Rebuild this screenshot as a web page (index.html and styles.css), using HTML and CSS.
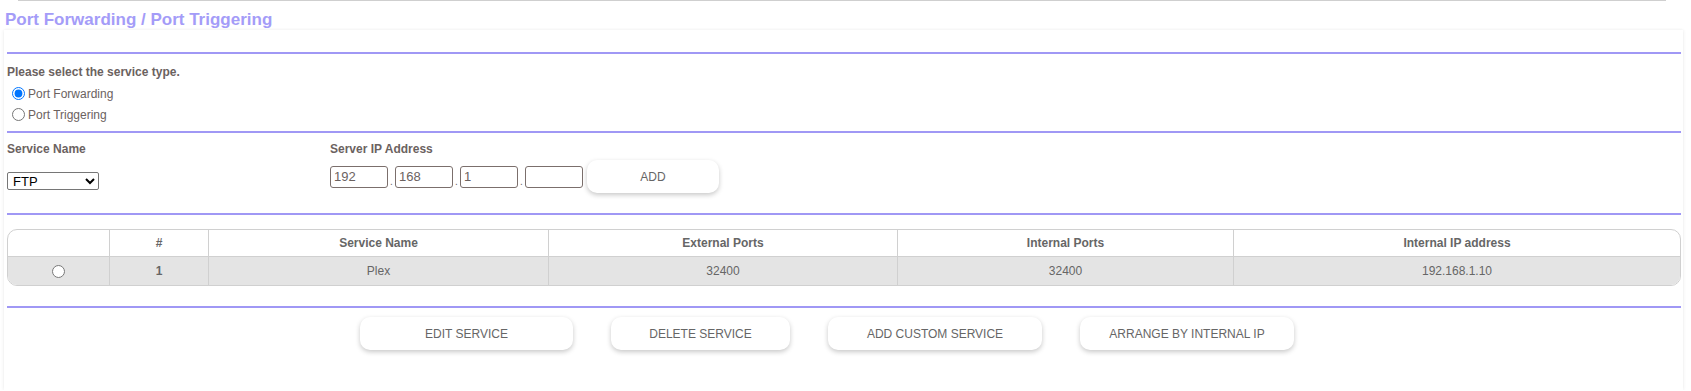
FILE: index.html
```html
<!DOCTYPE html>
<html lang="en">
<head>
    <meta charset="UTF-8">
    <meta name="viewport" content="width=device-width, initial-scale=1.0">
    <title>Port Forwarding / Port Triggering</title>
    <link rel="stylesheet" href="styles.css">
</head>
<body>
    <div class="topbar"></div>
    <h1 class="page-title">Port Forwarding / Port Triggering</h1>

    <div class="panel">
        <hr class="rule">

        <!-- service type -->
        <div class="service-type">
            <div class="label">Please select the service type.</div>
            <label class="radio-row">
                <input type="radio" name="svctype" value="forward" checked> Port Forwarding
            </label>
            <label class="radio-row">
                <input type="radio" name="svctype" value="trigger"> Port Triggering
            </label>
        </div>

        <hr class="rule">

        <div class="service-row">
            <div class="col-name">
                <div class="label">Service Name</div>
                <select class="service-select">
                    <option selected>FTP</option>
                    <option>HTTP</option>
                    <option>HTTPS</option>
                    <option>SSH</option>
                    <option>Telnet</option>
                </select>
            </div>
            <div class="col-ip">
                <div class="label">Server IP Address</div>
                <div class="ip-fields">
                    <input type="text" class="ip-box" value="192"><span class="dot">.</span>
                    <input type="text" class="ip-box" value="168"><span class="dot">.</span>
                    <input type="text" class="ip-box" value="1"><span class="dot">.</span>
                    <input type="text" class="ip-box" value="">
                    <button type="button" class="btn btn-add">ADD</button>
                </div>
            </div>
        </div>

        <hr class="rule">

        <table class="rules-table">
            <colgroup>
                <col style="width:101px">
                <col style="width:99px">
                <col style="width:340px">
                <col style="width:349px">
                <col style="width:336px">
                <col>
            </colgroup>
            <thead>
                <tr>
                    <th></th>
                    <th>#</th>
                    <th>Service Name</th>
                    <th>External Ports</th>
                    <th>Internal Ports</th>
                    <th>Internal IP address</th>
                </tr>
            </thead>
            <tbody>
                <tr>
                    <td><input type="radio" name="rule"></td>
                    <td class="num">1</td>
                    <td>Plex</td>
                    <td>32400</td>
                    <td>32400</td>
                    <td>192.168.1.10</td>
                </tr>
            </tbody>
        </table>

        <hr class="rule rule-bottom">

        <div class="actions">
            <button type="button" class="btn btn-edit">EDIT SERVICE</button>
            <button type="button" class="btn btn-delete">DELETE SERVICE</button>
            <button type="button" class="btn btn-wide">ADD CUSTOM SERVICE</button>
            <button type="button" class="btn btn-wide">ARRANGE BY INTERNAL IP</button>
        </div>
    </div>
</body>
</html>
```

FILE: styles.css
```css
body {
    margin: 0;
    font-family: "Liberation Sans", Arial, sans-serif;
    font-size: 12px;
    color: #6b625f;
    background-color: #fff;
}
.topbar {
    height: 1px;
    margin: 0 25px 0 18px;
    background-color: #cfcfcf;
}
.page-title {
    margin: 9px 0 0 5px;
    font-size: 17px;
    line-height: 20px;
    font-weight: bold;
    color: #a49cf8;
}
.panel {
    margin: 0 8px 0 4px;
    padding: 22px 2px 40px 3px;
    box-shadow: 1px 0 3px rgba(0, 0, 0, 0.05), -1px 0 3px rgba(0, 0, 0, 0.05);
}
.rule {
    height: 2px;
    margin: 0;
    border: none;
    background-color: #a098f5;
}
.label {
    font-weight: bold;
    line-height: 16px;
}

/* service type */
.service-type {
    padding: 10px 0 6px 0;
}
.service-type .label {
    margin-bottom: 3px;
}
.radio-row {
    display: flex;
    align-items: center;
    height: 21px;
}
.radio-row input {
    width: 13px;
    height: 13px;
    margin: 0 3px 0 5px;
}

/* service name + ip */
.service-row {
    display: flex;
    padding: 8px 0 20px 0;
}
.col-name {
    width: 323px;
}
.service-select {
    display: block;
    margin-top: 15px;
    width: 92px;
    height: 18px;
    padding: 0 0 0 1px;
    border: 1px solid #767676;
    border-radius: 2px;
    font-family: "Liberation Sans", Arial, sans-serif;
    font-size: 13px;
    color: #000;
    background-color: #fff;
}
.ip-fields {
    display: flex;
    align-items: center;
    margin-top: 3px;
}
.ip-box {
    box-sizing: border-box;
    width: 58px;
    height: 22px;
    padding: 0 3px;
    border: 1px solid #7b6f6c;
    border-radius: 3px;
    font-family: "Liberation Sans", Arial, sans-serif;
    font-size: 13px;
    color: #6b625f;
}
.dot {
    width: 7px;
    align-self: flex-end;
    margin-bottom: 6px;
    font-size: 10px;
    line-height: 10px;
    text-align: center;
}
.btn {
    height: 33px;
    border: none;
    border-radius: 10px;
    background-color: #fff;
    box-shadow: 0 2px 5px rgba(0, 0, 0, 0.22);
    font-family: "Liberation Sans", Arial, sans-serif;
    font-size: 12px;
    color: #666;
    cursor: pointer;
}
.btn-add {
    width: 132px;
    margin-left: 4px;
}

/* table */
.rules-table {
    width: 100%;
    margin-top: 14px;
    table-layout: fixed;
    border-collapse: separate;
    border-spacing: 0;
    border: 1px solid #d0d0d0;
    border-radius: 10px;
    overflow: hidden;
    color: #666;
}
.rules-table th,
.rules-table td {
    padding: 0;
    text-align: center;
    border-left: 1px solid #d0d0d0;
}
.rules-table th:first-child,
.rules-table td:first-child {
    border-left: none;
}
.rules-table th {
    height: 26px;
    font-weight: bold;
}
.rules-table td {
    height: 28px;
    border-top: 1px solid #d0d0d0;
    background-color: #e4e4e4;
}
.rules-table td.num {
    font-weight: bold;
}
.rules-table td input {
    width: 13px;
    height: 13px;
    margin: 4px 0 0 0;
}

.rule-bottom {
    margin-top: 20px;
}
.actions {
    display: flex;
    gap: 38px;
    padding: 9px 0 0 353px;
}
.btn-edit {
    width: 213px;
}
.btn-delete {
    width: 179px;
}
.btn-wide {
    width: 214px;
}
```
